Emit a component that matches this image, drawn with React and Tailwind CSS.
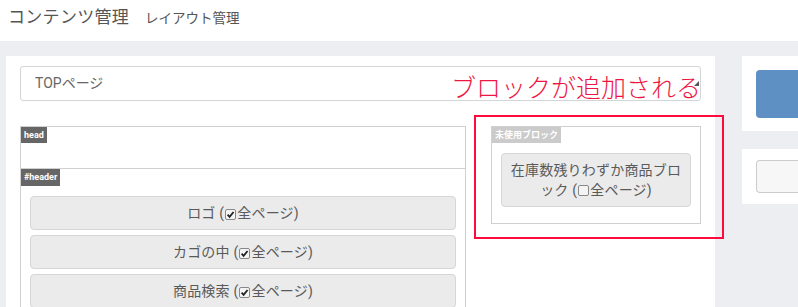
import React from 'react';

const font = { fontFamily: 'Roboto, "Noto Sans CJK JP", sans-serif' };

const Check = ({ on }) => (
  <span className="inline-flex items-center justify-center w-[11px] h-[11px] mx-[1px] border border-[#888] rounded-[2px] bg-[#f4f4f4] align-[-1px]">
    {on && (
      <svg width="9" height="9" viewBox="0 0 10 10">
        <path d="M1.8 5.2 L4 7.6 L8.4 2.2" fill="none" stroke="#222" strokeWidth="2" />
      </svg>
    )}
  </span>
);

const Block = ({ name, on }) => (
  <div className="bg-[#ebebeb] border border-[#d6d6d6] rounded-[4px] px-[6px] py-[6px] text-center text-[14px] leading-[20px] text-[#5a5a5a] tracking-[0.2px]">
    {name} (<Check on={on} />全ページ)
  </div>
);

const Tag = ({ children, dark, h = 'h-[16px] leading-[16px]' }) => (
  <div className={`w-fit px-[3px] ${h} text-[9px] font-bold text-white ${dark ? 'bg-[#666]' : 'bg-[#cbcbcb]'}`}>
    {children}
  </div>
);

export default function App() {
  return (
    <div className="w-[798px] h-[307px] overflow-hidden bg-[#edeef2]" style={font}>
      <div className="h-[41px] bg-white flex items-baseline pl-[8px] pt-[6px] text-[#555]">
        <span className="text-[17px] leading-[22px] tracking-[0.3px]">コンテンツ管理</span>
        <span className="ml-[16px] text-[13.5px] leading-[22px]">レイアウト管理</span>
      </div>

      <div className="flex pt-[15px] pl-[6px]">
        <div className="w-[709px] h-[260px] bg-white px-[14px] pt-[10px] shrink-0">
          <div className="relative h-[35px] border border-[#d3d6d6] rounded-[3px] pl-[14px] flex items-center text-[14px] text-[#666]">
            TOPページ
            <svg className="absolute right-[1px] top-[14px]" width="5" height="5" viewBox="0 0 5 5">
              <path d="M5 0 L5 5 L0 5 Z" fill="#555" />
            </svg>
            <span className="absolute left-[430px] top-[7px] text-[25px] leading-[30px] font-light text-[#ee1743] whitespace-nowrap">
              ブロックが追加される
            </span>
          </div>

          <div className="flex mt-[25px]">
            <div className="w-[446px] h-[200px] border border-[#d0d0d0] border-b-0 shrink-0">
              <div className="h-[42px] border-b border-[#d0d0d0]">
                <Tag dark>head</Tag>
              </div>
              <div>
                <Tag dark h="h-[17px] leading-[17px]">#header</Tag>
                <div className="flex flex-col gap-[5px] px-[9px] mt-[10px]">
                  <Block name="ロゴ" on />
                  <Block name="カゴの中" on />
                  <Block name="商品検索" on />
                </div>
              </div>
            </div>

            <div className="ml-[25px] w-[210px] relative">
              <div className="h-[98px] border border-[#d0d0d0]">
                <Tag>未使用ブロック</Tag>
                <div className="px-[9px] mt-[10px]">
                  <Block name="在庫数残りわずか商品ブロック" />
                </div>
              </div>
              <div className="absolute -left-[17px] -top-[11px] w-[250px] h-[124px] border-2 border-[#ff0a3c]" />
            </div>
          </div>
        </div>

        <div className="ml-[27px] flex flex-col gap-[18px] grow">
          <div className="h-[75px] bg-white pl-[14px] pt-[14px]">
            <div className="h-[48px] bg-[#5e90c3] rounded-l-[4px]" />
          </div>
          <div className="h-[55px] bg-white pl-[14px] pt-[11px]">
            <div className="h-[33px] bg-[#f7f7f7] border border-[#ccc] border-r-0 rounded-l-[4px]" />
          </div>
        </div>
      </div>
    </div>
  );
}
